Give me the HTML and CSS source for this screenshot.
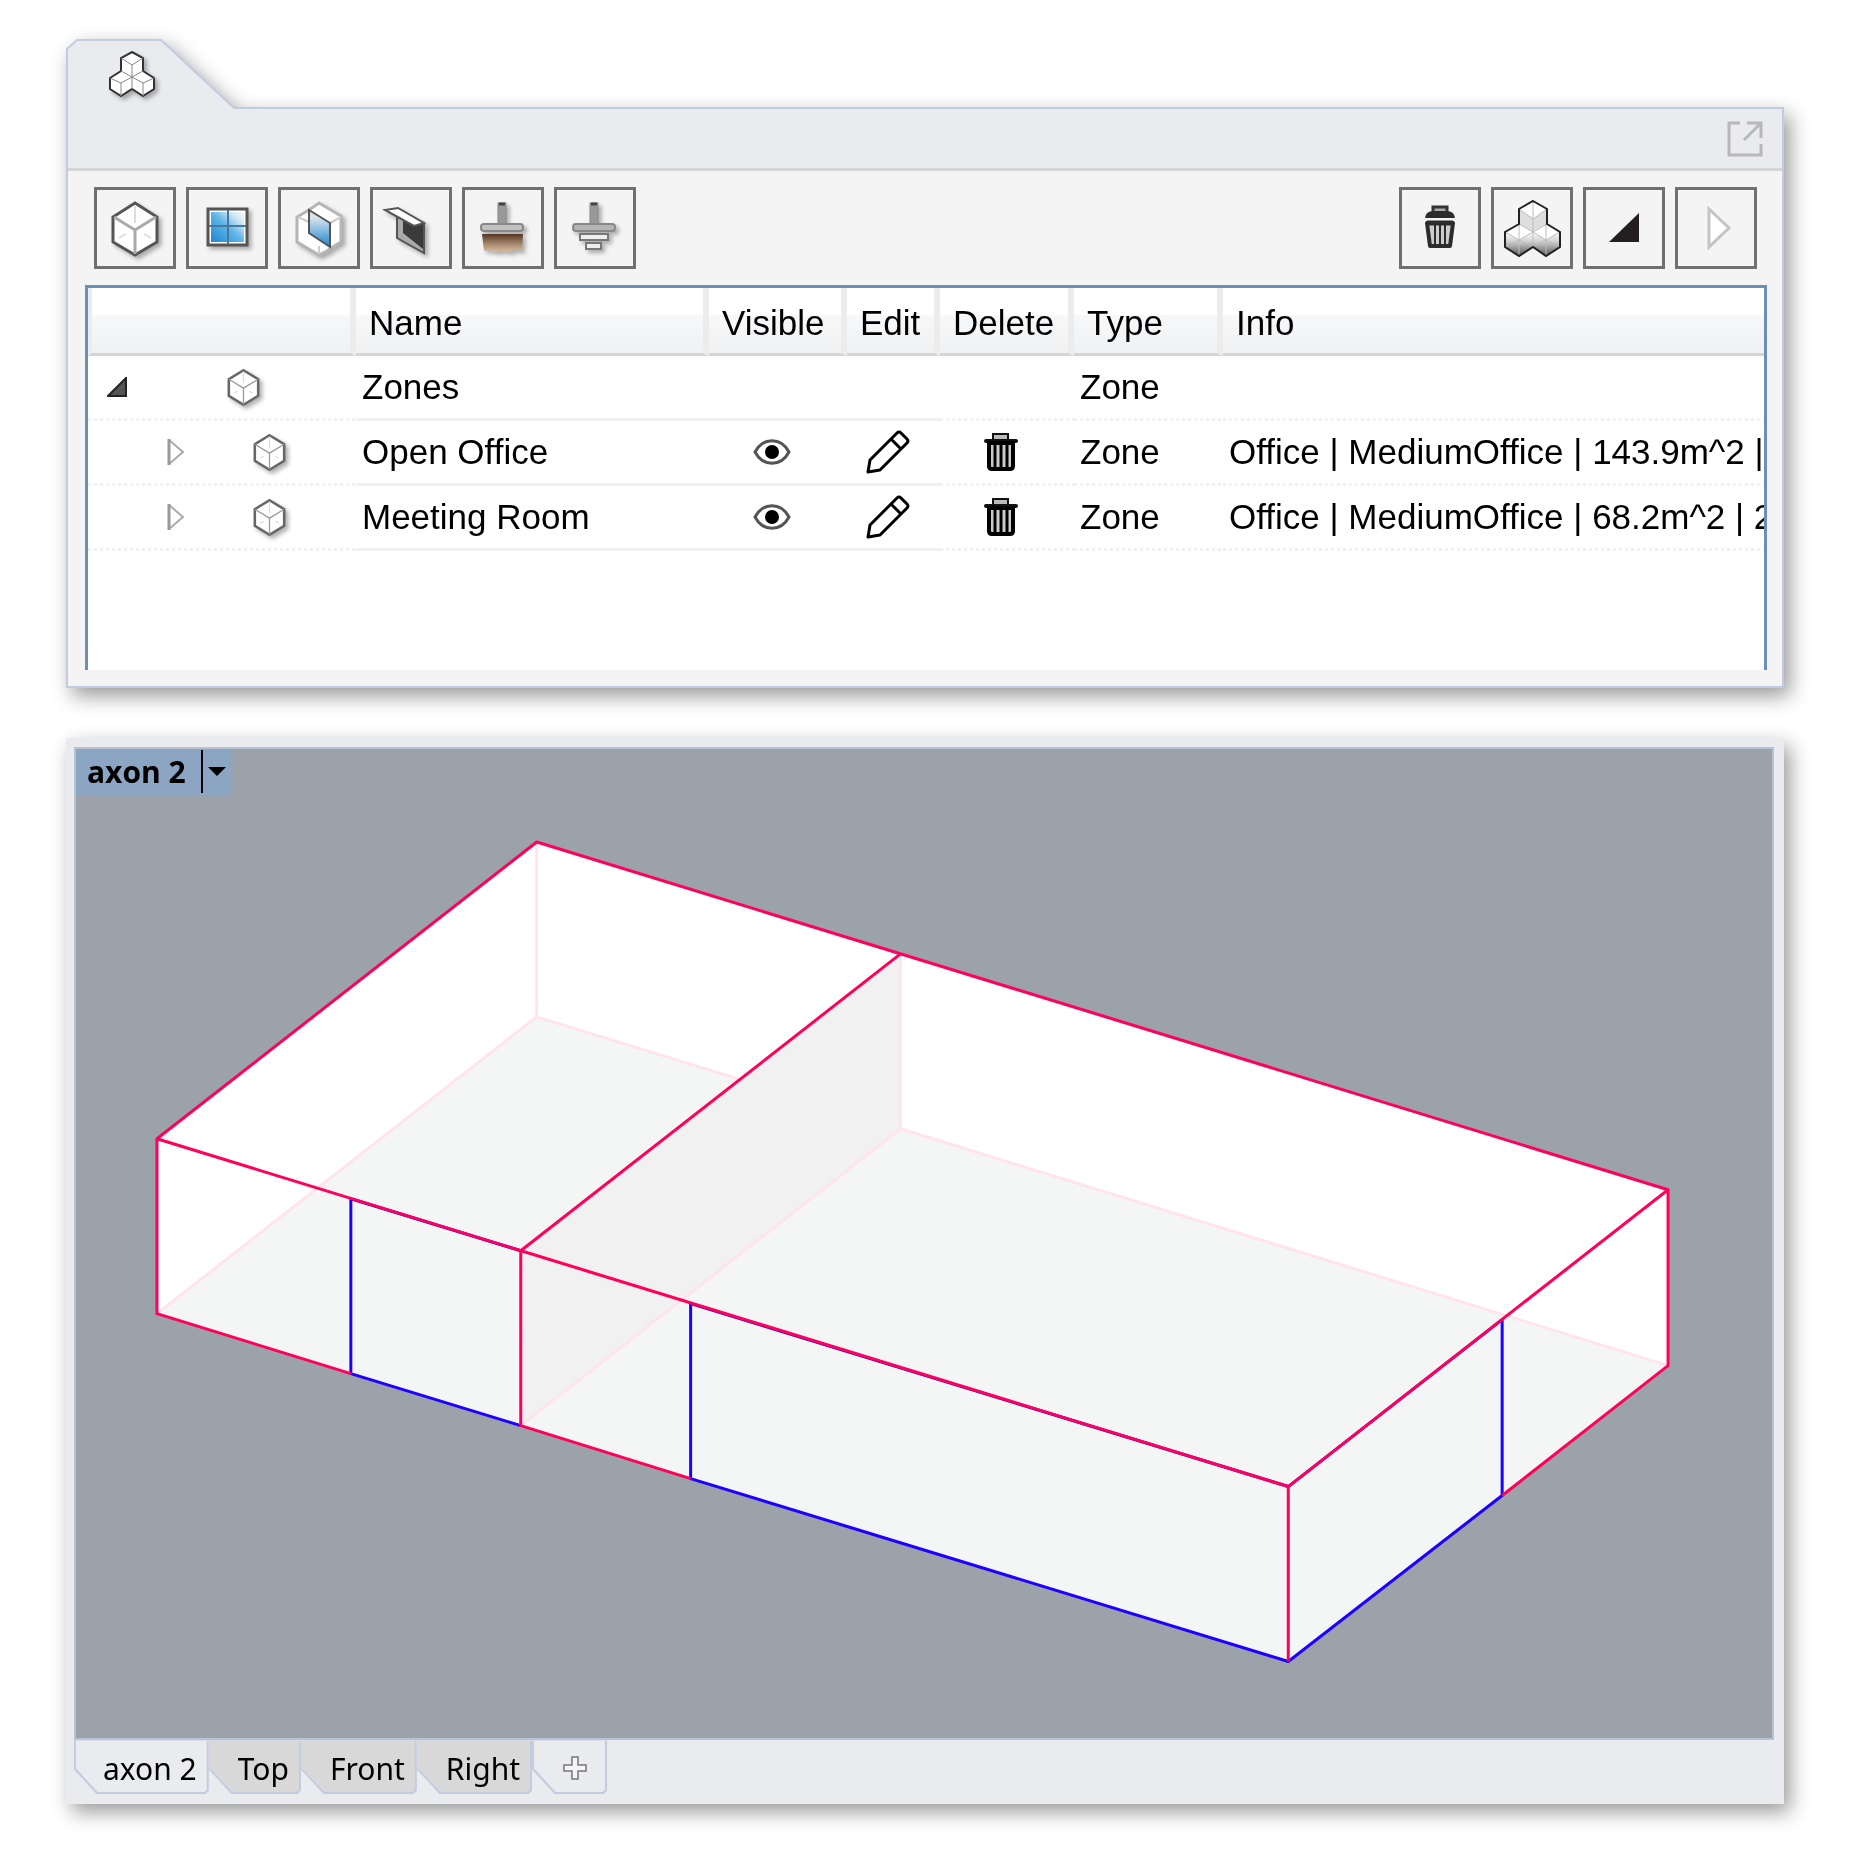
FILE: index.html
```html
<!DOCTYPE html>
<html lang="en">

<head>
    <meta charset="UTF-8">
    <meta name="viewport" content="width=device-width, initial-scale=1.0">
    <title>Zones</title>
    <link rel="stylesheet" href="styles.css">
</head>

<body>
    <!-- shared icons -->
    <svg class="defs" aria-hidden="true">
        <defs>
            <linearGradient id="glass" x1="0" y1="1" x2="1" y2="0">
                <stop offset="0" stop-color="#1c86d2" />
                <stop offset="0.5" stop-color="#5fb4e6" />
                <stop offset="0.8" stop-color="#d5e8f5" />
                <stop offset="1" stop-color="#f4f8fb" />
            </linearGradient>
            <linearGradient id="pane" x1="0" y1="0" x2="0" y2="1">
                <stop offset="0.2" stop-color="#d8e4ec" />
                <stop offset="1" stop-color="#1c86d2" />
            </linearGradient>
            <linearGradient id="bristle" x1="0" y1="0" x2="0" y2="1">
                <stop offset="0" stop-color="#553420" />
                <stop offset="0.5" stop-color="#a08066" />
                <stop offset="1" stop-color="#d8c0a0" />
            </linearGradient>
            <linearGradient id="shade" x1="0" y1="0" x2="0" y2="1">
                <stop offset="0" stop-color="#fff" />
                <stop offset="0.4" stop-color="#d0d0d0" />
                <stop offset="1" stop-color="#555" />
            </linearGradient>
        </defs>
        <symbol id="cube" viewBox="0 0 50 58">
            <path d="M25 2 48 16V42L25 56 2 42V16Z" fill="#fff" stroke="#666" stroke-width="4" />
            <path d="M2 16 25 30 48 16M25 30V56" fill="none" stroke="#999" stroke-width="2" />
            <path d="M25 4V22M10 38 16 35M34 35 40 38" fill="none" stroke="#ddd" stroke-width="2" />
        </symbol>
        <symbol id="cubes" viewBox="0 0 46 46">
            <path d="M23 1 34 7V20L45 27V38L34 45 23 38 12 45 1 38V27L12 20V7Z" fill="#fff" stroke="#333" stroke-width="2" />
            <path d="M12 7 23 14 34 7M23 14V38M12 20 23 26 34 20M1 27 12 32 23 26 34 32 45 27M12 32V45M34 32V45" fill="none" stroke="#888" />
        </symbol>
        <symbol id="eye" viewBox="0 0 48 48">
            <path d="M7 24C15 9 33 9 41 24 33 39 15 39 7 24Z" fill="#fff" stroke="#555" stroke-width="3" />
            <circle cx="24" cy="24" r="7" fill="#000" />
        </symbol>
        <symbol id="pencil" viewBox="0 0 48 48">
            <path d="M4 44 6 32 33 5Q35 3 37 5L43 11Q45 13 43 15L16 42ZM27 11 37 21" fill="#fff" stroke="#000" stroke-width="3" stroke-linejoin="round" />
        </symbol>
        <symbol id="bin" viewBox="0 0 48 48">
            <path d="M16 12V6H31V12" fill="#bbb" stroke="#111" stroke-width="2" />
            <path d="M9 13H39" stroke="#111" stroke-width="4" stroke-linecap="round" />
            <path d="M12 15H36V38Q36 41 33 41H15Q12 41 12 38Z" fill="#ccc" stroke="#000" stroke-width="4" />
            <path d="M18 16V40M24 16V40M30 16V40" stroke="#000" stroke-width="3" />
        </symbol>
        <symbol id="open" viewBox="0 0 20 20">
            <path d="M19 1V19H1Z" fill="#555" stroke="#222" stroke-width="2" />
        </symbol>
        <symbol id="closed" viewBox="0 0 20 26">
            <path d="M2 1 16 13 2 25Z" fill="#fff" stroke="#aaa" stroke-width="2" />
            <path d="M2 0V26" stroke="#999" stroke-width="3" />
        </symbol>
    </svg>

    <main class="page">
        <section class="panel">
            <div class="panel-tab">
                <svg class="tab-shape" width="170" height="70" viewBox="0 0 170 70">
                    <path d="M1 70V10L11 1H95L168 69V70Z" fill="#eaebef" />
                    <path d="M1 70V10L11 1H95L168 69" fill="none" stroke="#c3cbe0" stroke-width="2" />
                </svg>
                <svg class="tab-icon icon-shadow" width="46" height="46"><use href="#cubes" /></svg>
            </div>
            <div class="panel-body">
                <div class="titlebar">
                    <button class="popout" aria-label="Open in window">
                        <svg width="36" height="36" viewBox="0 0 36 36" fill="none" stroke="#b8b8b8" stroke-width="3">
                            <path d="M13 2H2V34H34V23M20 2H34V17M34 2 17 19" />
                        </svg>
                    </button>
                </div>

                <div class="toolbar">
                    <div class="tools">
                        <button class="tool" aria-label="Add zone">
                            <svg class="icon-shadow" viewBox="0 0 76 76">
                                <path d="M38 13 60 27V52L38 65 16 52V27Z" fill="#fff" stroke="#555" stroke-width="3" />
                                <path d="M17 27 38 40 59 27M38 40V64" fill="none" stroke="#aaa" stroke-width="3" />
                                <path d="M38 16V33M22 48 29 44M47 44 54 48" fill="none" stroke="#ddd" stroke-width="2" />
                            </svg>
                        </button>
                        <button class="tool" aria-label="Add window">
                            <svg class="icon-shadow" viewBox="0 0 76 76">
                                <rect x="19" y="19" width="39" height="36" fill="#fff" stroke="#555" stroke-width="3" />
                                <rect x="22" y="22" width="33" height="30" fill="url(#glass)" />
                                <path d="M39 20V54M20 36H57" stroke="#47799a" stroke-width="2" />
                            </svg>
                        </button>
                        <button class="tool" aria-label="Add opening">
                            <svg class="icon-shadow" viewBox="0 0 76 76">
                                <path d="M38 13 60 26V52L50 58 46 61 38 65 16 52V27L28 20Z" fill="#fff" stroke="#b5b5b5" stroke-width="3" />
                                <path d="M49 33 60 27M17 27 28 32M38 56V64" stroke="#ccc" stroke-width="2" />
                                <path d="M28 20 49 33V57L28 43Z" fill="url(#pane)" stroke="#555" stroke-width="2" />
                            </svg>
                        </button>
                        <button class="tool" aria-label="Add shading">
                            <svg class="icon-shadow" viewBox="0 0 76 76">
                                <path d="M24 27V48L51 63V33L36 30Z" fill="#aaa" stroke="#555" stroke-width="2" />
                                <path d="M30 31V43L50 59V33Z" fill="#3a3a3a" />
                                <path d="M12 20 25 18 51 33 41 36Z" fill="#fff" stroke="#555" stroke-width="2" />
                            </svg>
                        </button>
                        <button class="tool" aria-label="Match properties">
                            <svg class="icon-shadow" viewBox="0 0 76 76">
                                <path d="M17 44H58L57 61 50 60 44 62 37 61 30 62 24 60 19 61Z" fill="url(#bristle)" />
                                <rect x="33" y="13" width="8" height="22" fill="#999" stroke="#888" />
                                <path d="M34 14H40" stroke="#444" stroke-width="3" />
                                <rect x="16" y="34" width="42" height="7" rx="3" fill="#c2c2c2" stroke="#888" stroke-width="2" />
                            </svg>
                        </button>
                        <button class="tool" aria-label="Ground">
                            <svg class="icon-shadow" viewBox="0 0 76 76">
                                <rect x="33" y="13" width="8" height="22" fill="#999" stroke="#888" />
                                <path d="M34 14H40" stroke="#444" stroke-width="3" />
                                <rect x="16" y="34" width="42" height="7" rx="3" fill="#b5b5b5" stroke="#888" stroke-width="2" />
                                <rect x="23" y="44" width="28" height="6" fill="#eee" stroke="#777" stroke-width="2" />
                                <rect x="29" y="53" width="15" height="6" fill="#eee" stroke="#777" stroke-width="2" />
                            </svg>
                        </button>
                    </div>
                    <div class="tools">
                        <button class="tool" aria-label="Delete all">
                            <svg viewBox="0 0 76 76">
                                <path d="M31 22V17H45V22" fill="#aaa" stroke="#333" stroke-width="3" />
                                <path d="M23 28Q24 21 31 21H45Q52 21 53 28Z" fill="#2c2c2c" />
                                <path d="M25 33H51L48 56H28Z" fill="#ccc" stroke="#2c2c2c" stroke-width="4" stroke-linejoin="round" />
                                <path d="M25 33H51" stroke="#2c2c2c" stroke-width="5" />
                                <path d="M33 35V55M38 35V55M43 35V55" stroke="#2c2c2c" stroke-width="2" />
                            </svg>
                        </button>
                        <button class="tool" aria-label="Show all zones">
                            <svg viewBox="0 0 76 76">
                                <path d="M39 11 53 19V34L66 42V57L52 66 39 57 25 66 11 57V42L25 34V19Z" fill="#fff" />
                                <path d="M39 29 53 19V34L39 42 25 34V19Z" fill="#dedede" />
                                <path d="M11 42 25 50 39 42V57L25 66 11 57ZM39 42 52 50 66 42V57L52 66 39 57Z" fill="url(#shade)" />
                                <path d="M25 19 39 29 53 19M39 11V57M25 34 39 42 53 34M11 42 25 50 39 42 52 50 66 42M25 34V66M52 34V66M11 57 25 50 39 57 52 50 66 57" fill="none" stroke="#bbb" stroke-width="1" />
                                <path d="M39 11 53 19V34L66 42V57L52 66 39 57 25 66 11 57V42L25 34V19Z" fill="none" stroke="#222" stroke-width="2" />
                            </svg>
                        </button>
                        <button class="tool" aria-label="Expand all">
                            <svg viewBox="0 0 76 76">
                                <path d="M53 23V52H23Z" fill="#231f20" />
                            </svg>
                        </button>
                        <button class="tool" aria-label="Collapse all">
                            <svg viewBox="0 0 76 76">
                                <path d="M31 19 51 38 31 57Z" fill="#fff" stroke="#c4c4c4" stroke-width="3" />
                            </svg>
                        </button>
                    </div>
                </div>

                <div class="grid">
                    <table>
                        <colgroup>
                            <col class="col-tree">
                            <col class="col-name">
                            <col class="col-visible">
                            <col class="col-edit">
                            <col class="col-delete">
                            <col class="col-type">
                            <col>
                        </colgroup>
                        <thead>
                            <tr>
                                <th></th>
                                <th>Name</th>
                                <th>Visible</th>
                                <th>Edit</th>
                                <th>Delete</th>
                                <th>Type</th>
                                <th>Info</th>
                            </tr>
                        </thead>
                        <tbody>
                            <tr>
                                <td>
                                    <div class="tree level-0">
                                        <button class="plain" aria-label="Collapse Zones"><svg width="20" height="20"><use href="#open" /></svg></button>
                                        <svg class="icon-shadow" width="33" height="37"><use href="#cube" /></svg>
                                    </div>
                                </td>
                                <td>Zones</td>
                                <td></td>
                                <td></td>
                                <td></td>
                                <td>Zone</td>
                                <td></td>
                            </tr>
                            <tr>
                                <td>
                                    <div class="tree level-1">
                                        <button class="plain" aria-label="Expand Open Office"><svg width="20" height="26"><use href="#closed" /></svg></button>
                                        <svg class="icon-shadow" width="33" height="37"><use href="#cube" /></svg>
                                    </div>
                                </td>
                                <td>Open Office</td>
                                <td class="action"><button class="plain" aria-label="Visible"><svg width="48" height="48"><use href="#eye" /></svg></button></td>
                                <td class="action"><button class="plain" aria-label="Edit"><svg width="48" height="48"><use href="#pencil" /></svg></button></td>
                                <td class="action"><button class="plain" aria-label="Delete"><svg width="48" height="48"><use href="#bin" /></svg></button></td>
                                <td>Zone</td>
                                <td>Office | MediumOffice | 143.9m^2 |</td>
                            </tr>
                            <tr>
                                <td>
                                    <div class="tree level-1">
                                        <button class="plain" aria-label="Expand Meeting Room"><svg width="20" height="26"><use href="#closed" /></svg></button>
                                        <svg class="icon-shadow" width="33" height="37"><use href="#cube" /></svg>
                                    </div>
                                </td>
                                <td>Meeting Room</td>
                                <td class="action"><button class="plain" aria-label="Visible"><svg width="48" height="48"><use href="#eye" /></svg></button></td>
                                <td class="action"><button class="plain" aria-label="Edit"><svg width="48" height="48"><use href="#pencil" /></svg></button></td>
                                <td class="action"><button class="plain" aria-label="Delete"><svg width="48" height="48"><use href="#bin" /></svg></button></td>
                                <td>Zone</td>
                                <td>Office | MediumOffice | 68.2m^2 | 2</td>
                            </tr>
                        </tbody>
                    </table>
                </div>
            </div>
        </section>

        <section class="viewer">
            <div class="viewport">
                <button class="view-label">
                    <span class="view-name">axon 2</span>
                    <svg class="view-arrow" width="18" height="9" viewBox="0 0 18 9"><path d="M0 0H18L9 9Z" /></svg>
                </button>
                <svg class="scene" viewBox="0 0 1697 990">
                    <!-- volume, floor and the wall between the two rooms -->
                    <path d="M81 390 461 93 1593 441V617L1213 913 81 565Z" fill="#fff" />
                    <path d="M81 565 461 268 1593 617 1213 913Z" fill="#f4f6f6" />
                    <path d="M461 93V268L81 565M461 268 825 380" class="edge-hidden" />
                    <path d="M825 205V380L445 677V502Z" fill="#f1f1f2" />
                    <path d="M825 205V380L445 677M825 380 1593 617" class="edge-hidden" />
                    <!-- windows -->
                    <path d="M275 450 445 502M615 555 1213 738 1427 571" class="edge-window" />
                    <path d="M275 450V625L445 677M615 555V730L1213 913 1427 747V571" class="edge-window" />
                    <!-- zone edges -->
                    <path d="M275 625 81 565V390L461 93 1593 441V617L1427 747M81 390 1213 738 1593 441M825 205 445 502V677L615 730M1213 738V913" class="edge" />
                </svg>
            </div>
            <div class="view-tabs">
                <button class="view-tab active">axon 2</button>
                <button class="view-tab">Top</button>
                <button class="view-tab">Front</button>
                <button class="view-tab">Right</button>
                <button class="view-tab add" aria-label="Add view">
                    <svg width="24" height="24" viewBox="0 0 24 24">
                        <path d="M9 1H15V9H23V15H15V23H9V15H1V9H9Z" fill="#f4f4f4" stroke="#777" stroke-width="1.5" />
                    </svg>
                </button>
            </div>
        </section>
    </main>
</body>

</html>
```

FILE: styles.css
```css
* {
    box-sizing: border-box;
}

body {
    margin: 0;
    background-color: #fff;
    color: #000;
    font-family: "Liberation Sans", Arial, sans-serif;
}

button {
    padding: 0;
    border: none;
    background: none;
    font: inherit;
    color: inherit;
    cursor: pointer;
}

svg {
    display: block;
}

.defs {
    position: absolute;
    width: 0;
    height: 0;
}

.page {
    display: flex;
    flex-direction: column;
    gap: 50px;
    padding: 39px 75px 54px 66px;
}

.icon-shadow {
    overflow: visible;
    filter: drop-shadow(3px 3px 2px rgba(0, 0, 0, 0.3));
}

/* zone panel */
.panel,
.viewer {
    filter: drop-shadow(6px 8px 10px rgba(0, 0, 0, 0.4));
}

.panel-tab {
    position: relative;
    z-index: 1;
    width: 170px;
    margin-bottom: -2px;
}

.tab-icon {
    position: absolute;
    left: 43px;
    top: 12px;
}

.panel-body {
    border: 2px solid #c3cbe0;
    background-color: #f4f4f4;
    padding-bottom: 16px;
}

.titlebar {
    display: flex;
    justify-content: flex-end;
    padding: 12px 19px 11px;
    background-color: #eaebef;
    border-bottom: 3px solid #d5d5d5;
}

.toolbar {
    display: flex;
    justify-content: space-between;
    padding: 16px 25px 16px 26px;
}

.tools {
    display: flex;
    gap: 10px;
}

.tool {
    width: 82px;
    height: 82px;
    border: 3px solid #707070;
}

.grid {
    margin: 0 15px 0 17px;
    padding-bottom: 119px;
    border: 3px solid #6c8fb5;
    border-bottom: none;
    background-color: #fff;
}

table {
    width: 100%;
    table-layout: fixed;
    border-collapse: separate;
    border-spacing: 0;
    font-size: 35px;
    line-height: 40px;
    white-space: nowrap;
}

.col-tree {
    width: 268px;
}

.col-name {
    width: 353px;
}

.col-visible {
    width: 138px;
}

.col-edit {
    width: 93px;
}

.col-delete {
    width: 134px;
}

.col-type {
    width: 149px;
}

th {
    height: 68px;
    padding: 4px 0 0 13px;
    border-right: 6px solid #ececec;
    border-bottom: 3px solid #d5d5d5;
    background: linear-gradient(#fff 27px, #f7f8fa 27px, #f0f1f3);
    font-weight: normal;
    text-align: left;
}

th:first-child {
    border-left: 4px solid #ececec;
}

th:last-child {
    border-right: none;
}

td {
    height: 65px;
    padding: 0 0 3px 6px;
    overflow: hidden;
    background: repeating-linear-gradient(90deg, #f0f0f0 0 3px, #fff 3px 6px) bottom / 100% 3px no-repeat;
}

td:nth-child(2),
td:nth-child(3),
td:nth-child(4) {
    background: linear-gradient(#f0f0f0, #f0f0f0) bottom / 100% 3px no-repeat;
}

td:first-child {
    padding-left: 0;
}

.tree {
    display: flex;
    align-items: center;
}

.level-0 {
    padding-left: 19px;
    gap: 100px;
}

.level-1 {
    padding-left: 79px;
    gap: 66px;
}

.action {
    padding: 0 12px 3px 0;
}

.action .plain {
    display: block;
    margin: 0 auto;
}

/* model viewer */
.viewer {
    background-color: #eaebef;
    padding: 9px 10px 10px 8px;
}

.viewport {
    position: relative;
    border: 2px solid #b7c2d2;
    background-color: #9ca2aa;
}

.view-label {
    position: absolute;
    top: 0;
    left: 0;
    display: flex;
    align-items: center;
    height: 47px;
    padding: 0 6px 2px 11px;
    border-bottom-right-radius: 8px;
    background-color: #8ba5c2;
    font-family: "Open Sans", sans-serif;
    font-size: 30px;
    line-height: 43px;
    font-weight: bold;
}

.view-name {
    padding-right: 15px;
    border-right: 2px solid #000;
}

.view-arrow {
    margin-left: 5px;
}

.scene {
    width: 100%;
    height: auto;
}

.edge,
.edge-window,
.edge-hidden {
    fill: none;
    stroke-width: 3;
    stroke-linejoin: round;
}

.edge {
    stroke: #ff005a;
}

.edge-window {
    stroke: #1e00ff;
}

.edge-hidden {
    stroke: #ffe4ec;
}

.view-tabs {
    display: flex;
    font-family: "Noto Sans", sans-serif;
    font-size: 30px;
    line-height: 54px;
}

/* cut corner: outer shape is the outline, inner one the fill */
.view-tab {
    position: relative;
    z-index: 0;
    height: 54px;
    padding: 2px 12px 0 29px;
    background-color: #c3cbe0;
    clip-path: polygon(0 0, 100% 0, 100% 50px, calc(100% - 4px) 100%, 23px 100%, 0 29px);
}

.view-tab::before {
    content: "";
    position: absolute;
    z-index: -1;
    inset: 0 2px 2px 0;
    background-color: #d8d8d8;
    clip-path: polygon(0 0, 100% 0, 100% 49px, calc(100% - 3px) 100%, 24px 100%, 0 27px);
}

.view-tab.active::before,
.view-tab.add::before {
    left: 2px;
    background-color: #eaebef;
    clip-path: polygon(0 0, 100% 0, 100% 49px, calc(100% - 3px) 100%, 22px 100%, 0 28px);
}

.view-tab.add {
    padding: 2px 20px 0 31px;
}
```
